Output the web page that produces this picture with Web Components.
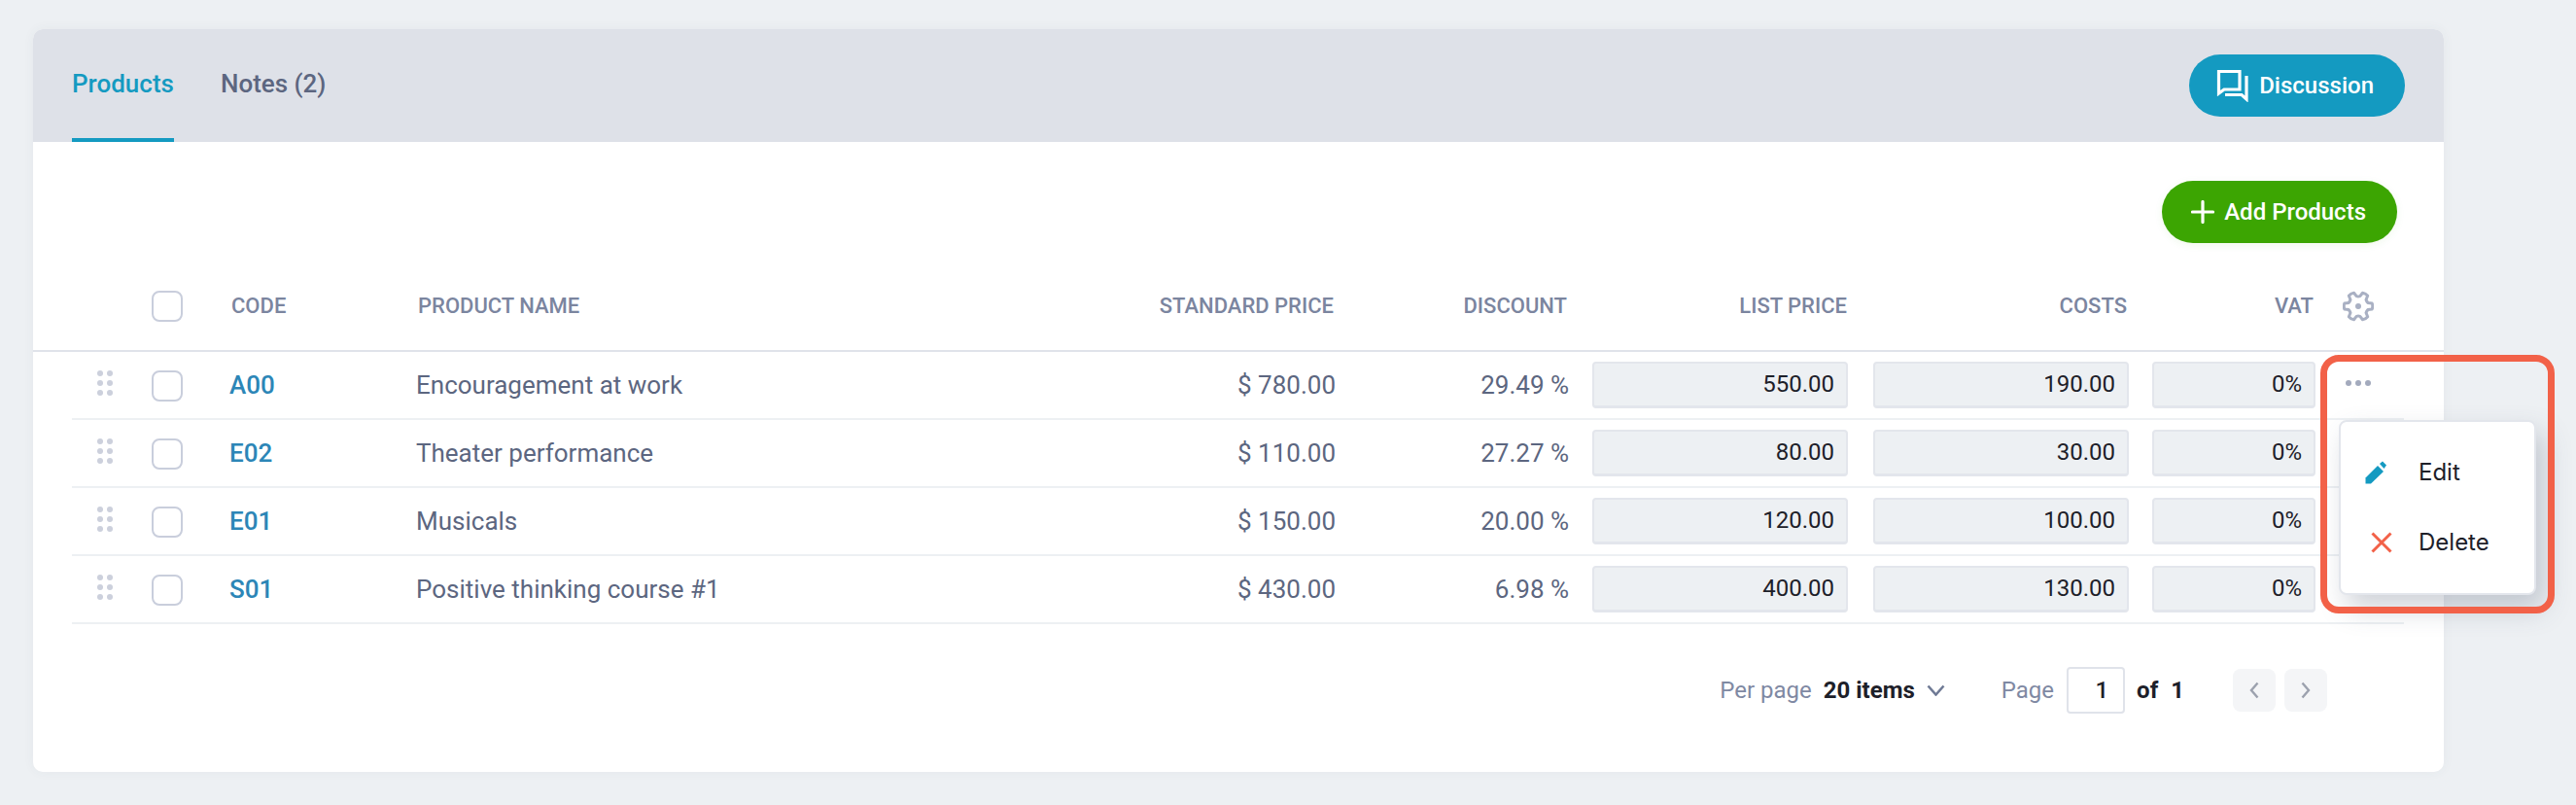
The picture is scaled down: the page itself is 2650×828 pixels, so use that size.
<!DOCTYPE html>
<html lang="en">
<head>
<meta charset="utf-8">
<title>Products</title>
<style>
html,body{margin:0;padding:0;background:#edf0f3;}
body{font-family:Roboto,"Liberation Sans",sans-serif;}
</style>
</head>
<body>
<page-frame>
  <deal-card>
    <tab-bar slot="head">
      <tab-item active>Products</tab-item>
      <tab-item>Notes (2)</tab-item>
      <pill-button slot="action" tone="teal" icon="chat">Discussion</pill-button>
    </tab-bar>
    <tool-bar><pill-button tone="green" icon="plus">Add Products</pill-button></tool-bar>
    <product-head></product-head>
    <product-row code="A00" name="Encouragement at work" std="$ 780.00" disc="29.49 %" list="550.00" costs="190.00" vat="0%" more></product-row>
    <product-row code="E02" name="Theater performance" std="$ 110.00" disc="27.27 %" list="80.00" costs="30.00" vat="0%"></product-row>
    <product-row code="E01" name="Musicals" std="$ 150.00" disc="20.00 %" list="120.00" costs="100.00" vat="0%"></product-row>
    <product-row code="S01" name="Positive thinking course #1" std="$ 430.00" disc="6.98 %" list="400.00" costs="130.00" vat="0%"></product-row>
    <pager-bar></pager-bar>
  </deal-card>
  <row-menu slot="overlay"></row-menu>
  <focus-ring slot="overlay"></focus-ring>
</page-frame>

<script>
const COLS = '82px 80px 192px 600px 346px 240px 287px 289px 192px 91px';

function gearPath(cx, cy, R, r) {
  const p = [];
  for (let i = 0; i < 6; i++) {
    const a = (i * 60 + 30) * Math.PI / 180 - Math.PI / 2;
    const d = 12 * Math.PI / 180, v = 20 * Math.PI / 180;
    const pt = (rad, ang) => (cx + rad * Math.cos(ang)).toFixed(2) + ' ' + (cy + rad * Math.sin(ang)).toFixed(2);
    p.push((i ? 'L' : 'M') + pt(r, a - v));
    p.push('L' + pt(R, a - d));
    p.push('Q' + pt(R * 1.06, a) + ' ' + pt(R, a + d));
    p.push('L' + pt(r, a + v));
    const nx = a + 30 * Math.PI / 180;
    p.push('Q' + pt(r * 0.94, nx) + ' ' + pt(r, nx + 10 * Math.PI / 180));
  }
  return p.join(' ') + ' Z';
}

function define(name, css, html) {
  customElements.define(name, class extends HTMLElement {
    constructor() {
      super();
      this.attachShadow({ mode: 'open' });
    }
    connectedCallback() {
      const body = typeof html === 'function' ? html(this) : html;
      this.shadowRoot.innerHTML = '<style>' + css + '</style>' + body;
    }
  });
}

define('page-frame',
  `:host{display:block;position:relative;box-sizing:border-box;width:2650px;height:828px;padding:30px 136px 34px 34px;background:#edf0f3;font-family:Roboto,"Liberation Sans",sans-serif;}`,
  `<slot></slot><slot name="overlay"></slot>`);

define('deal-card',
  `:host{display:block;box-sizing:border-box;width:2480px;height:764px;background:#fff;border-radius:10px;box-shadow:0 0 12px rgba(60,70,100,.05);}
   .head{border-radius:10px 10px 0 0;overflow:hidden;}`,
  `<div class="head"><slot name="head"></slot></div><slot></slot>`);

define('tab-bar',
  `:host{display:flex;box-sizing:border-box;height:116px;background:#dee1e8;padding:0 40px;align-items:center;gap:48px;}
   .sp{flex:1;}`,
  `<slot></slot><div class="sp"></div><slot name="action"></slot>`);

define('tab-item',
  `:host{display:block;box-sizing:border-box;height:116px;padding-top:41px;font:500 26px/30px Roboto,sans-serif;color:#5c6680;}
   :host([active]){color:#149ac1;border-bottom:4px solid #149ac1;}`,
  `<slot></slot>`);

const ICONS = {
  chat: `<svg width="34" height="34" viewBox="0 0 34 34" fill="none" stroke="#fff" stroke-width="3.2"><path d="M2.5 2.5H24V21H8L2.5 25Z"/><path d="M31 7V31L26 26.5H9"/></svg>`,
  plus: `<svg width="24" height="24" viewBox="0 0 24 24" fill="none" stroke="#fff" stroke-width="3.2" stroke-linecap="round"><path d="M12 1.5V22.5M1.5 12H22.5"/></svg>`
};

define('pill-button',
  `:host{display:inline-flex;box-sizing:border-box;height:64px;border-radius:32px;align-items:center;gap:10px;font:500 24px/28px Roboto,sans-serif;color:#fff;padding:0 32px 0 28px;white-space:nowrap;}
   :host([tone=teal]){background:#149ac1;}
   :host([tone=green]){background:#3ca502;padding-left:30px;box-shadow:0 2px 8px rgba(60,165,2,.08);}
   svg{display:block;flex:none;}`,
  el => ICONS[el.getAttribute('icon')] + '<slot></slot>');

define('tool-bar',
  `:host{display:flex;justify-content:flex-end;padding:40px 48px 19px 0;}`,
  `<slot></slot>`);

define('check-box',
  `:host{display:block;box-sizing:border-box;width:32px;height:32px;border:2.5px solid #c9cedc;border-radius:8px;background:#fff;}`,
  ``);

define('product-head',
  `:host{display:grid;grid-template-columns:${COLS};height:93px;box-sizing:border-box;border-bottom:2px solid #e0e3ea;align-items:center;padding-left:40px;font:500 22px/24px Roboto,sans-serif;color:#7b859f;}
   .r{text-align:right;}
   .pl{padding-left:2px;}
   .gear{display:block;margin-left:28px;}`,
  () => `<span></span><check-box></check-box>
    <span class="pl">CODE</span><span class="pl">PRODUCT NAME</span>
    <span class="r" style="padding-right:2px">STANDARD PRICE</span>
    <span class="r" style="padding-right:2px">DISCOUNT</span>
    <span class="r" style="padding-right:1px">LIST PRICE</span>
    <span class="r" style="padding-right:2px">COSTS</span>
    <span class="r" style="padding-right:2px">VAT</span>
    <svg class="gear" width="32" height="32" viewBox="0 0 32 32" fill="none"><path d="${gearPath(16, 16, 14.5, 10.5)}" stroke="#a9b0c3" stroke-width="3" stroke-linejoin="round"/><circle cx="16" cy="16" r="3" fill="#a9b0c3"/></svg>`);

define('drag-dots',
  `:host{display:block;width:26px;margin:0 0 4px 26px;}svg{display:block;}`,
  `<svg width="16" height="26" viewBox="0 0 16 26" fill="#ccd0dc"><circle cx="3" cy="3" r="3"/><circle cx="13" cy="3" r="3"/><circle cx="3" cy="13" r="3"/><circle cx="13" cy="13" r="3"/><circle cx="3" cy="23" r="3"/><circle cx="13" cy="23" r="3"/></svg>`);

define('price-input',
  `:host{display:block;box-sizing:border-box;height:48px;background:#edf0f3;border:2px solid #e3e6ec;border-bottom-width:3px;border-radius:4px;padding-right:12px;text-align:right;font:400 24px/43px Roboto,sans-serif;color:#1d2029;justify-self:end;}`,
  `<slot></slot>`);

define('product-row',
  `:host{display:grid;grid-template-columns:${COLS};height:70px;box-sizing:border-box;border-bottom:2px solid #edf0f3;align-items:center;margin:0 41px 0 40px;font:400 26px/30px Roboto,sans-serif;color:#5c6680;}
   .code{font-weight:500;color:#2c86b7;}
   .r{text-align:right;}
   check-box{margin-top:2px;}
   .more{display:flex;gap:4px;margin:0 0 4px 31px;}
   .more i{display:block;width:6px;height:6px;border-radius:50%;background:#a3aabd;}`,
  el => {
    const a = n => el.getAttribute(n);
    return `<drag-dots></drag-dots><check-box></check-box>
      <span class="code">${a('code')}</span><span>${a('name')}</span>
      <span class="r">${a('std')}</span><span class="r">${a('disc')}</span>
      <price-input style="width:263px">${a('list')}</price-input>
      <price-input style="width:263px">${a('costs')}</price-input>
      <price-input style="width:168px">${a('vat')}</price-input>
      ${el.hasAttribute('more') ? '<div class="more"><i></i><i></i><i></i></div>' : '<span></span>'}`;
  });

define('pager-bar',
  `:host{display:flex;justify-content:flex-end;align-items:center;height:48px;margin-top:44px;padding-right:120px;font:400 24px/28px Roboto,sans-serif;color:#7f89a3;}
   b{font-weight:700;color:#1d2029;}
   .box{box-sizing:border-box;width:60px;height:48px;border:2px solid #e0e3ea;border-radius:4px;background:#fff;text-align:right;padding-right:15px;font:500 24px/44px Roboto,sans-serif;color:#1d2029;margin:0 12px 0 13px;}
   .nav{box-sizing:border-box;width:44px;height:44px;border-radius:8px;background:#f4f5f7;display:flex;align-items:center;justify-content:center;}
   svg{display:block;}
   .chev{margin:0 58px 0 12px;}`,
  `<span>Per page</span><b style="margin-left:12px">20 items</b>
   <svg class="chev" width="19" height="12" viewBox="0 0 19 12" fill="none" stroke="#6f7a95" stroke-width="2.6"><path d="M1.5 1.5L9.5 10.5L17.5 1.5"/></svg>
   <span>Page</span><div class="box">1</div><b>of</b><b style="margin-left:13px;margin-right:50px">1</b>
   <div class="nav"><svg width="10" height="18" viewBox="0 0 10 18" fill="none" stroke="#9ca1ae" stroke-width="2.4"><path d="M8.5 1.5L2 9L8.5 16.5"/></svg></div>
   <div class="nav" style="margin-left:9px"><svg width="10" height="18" viewBox="0 0 10 18" fill="none" stroke="#9ca1ae" stroke-width="2.4"><path d="M1.5 1.5L8 9L1.5 16.5"/></svg></div>`);

define('row-menu',
  `:host{position:absolute;left:2406px;top:432px;width:203px;height:180px;box-sizing:border-box;background:#fff;border:2px solid #e3e6ec;border-radius:8px;padding:16px 0 0 25px;box-shadow:8px 14px 28px rgba(70,80,105,.26);font:400 24px/28px Inter,Roboto,sans-serif;color:#1d2029;}
   .it{display:grid;grid-template-columns:55px 1fr;align-items:center;height:72px;}
   svg{display:block;}`,
  `<div class="it"><svg width="23" height="24" viewBox="0 0 23 24" fill="#149ac1"><path d="M.5 22.5V17.5L13 5L19 11L6 23.5H.5Z"/><path d="M15 3L18 .5L22 4.5L19.5 8Z"/></svg><span>Edit</span></div>
   <div class="it"><svg style="margin-left:6px" width="22" height="22" viewBox="0 0 22 22" fill="none" stroke="#f26148" stroke-width="3"><path d="M1.5 1.5L20.5 20.5M20.5 1.5L1.5 20.5"/></svg><span>Delete</span></div>`);

define('focus-ring',
  `:host{position:absolute;left:2387px;top:365px;width:241px;height:266px;box-sizing:border-box;border:7px solid #f26148;border-radius:19px;pointer-events:none;}`,
  ``);
</script>
</body>
</html>
